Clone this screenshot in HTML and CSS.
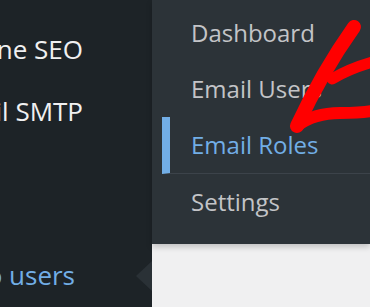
FILE: index.html
```html
<!DOCTYPE html>
<html lang="en">
<head>
    <meta charset="UTF-8">
    <meta name="viewport" content="width=device-width, initial-scale=1.0">
    <title>Email Users menu</title>
    <link rel="stylesheet" href="styles.css">
</head>
<body>
    <div class="screen">
        <nav class="sidebar">
            <ul class="menu">
                <li class="menu-item"><span>All in One SEO</span></li>
                <li class="menu-item"><span>WP Mail SMTP</span></li>
                <li class="menu-spacer"></li>
                <li class="menu-item is-open"><span>Email to users</span></li>
            </ul>
        </nav>

        <main class="content">
            <ul class="submenu">
                <li>Dashboard</li>
                <li>Email Users</li>
                <li class="current">Email Roles</li>
                <li>Settings</li>
            </ul>
        </main>

        <!-- red hand drawn arrow pointing at Email Roles -->
        <svg class="scribble" width="370" height="307" viewBox="0 0 370 307">
            <g fill="none" stroke="#ff0000" stroke-linecap="round" stroke-linejoin="round">
                <path d="M354 27 Q 322 72 297 126" stroke-width="14"/>
                <path d="M297 126 Q 314 113 340 113 T 376 110" stroke-width="12"/>
                <path d="M332 79 Q 350 68 376 61" stroke-width="11"/>
            </g>
        </svg>
    </div>
</body>
</html>
```

FILE: styles.css
```css
body {
    margin: 0;
    padding: 0;
    font-family: 'Open Sans', 'Noto Sans', sans-serif;
    background-color: #f0f0f1;
    overflow: hidden;
}

.screen {
    position: relative;
    display: flex;
    width: 370px;
    height: 307px;
    overflow: hidden;
}

.sidebar {
    width: 152px;
    flex-shrink: 0;
    background-color: #1d2327;
}

.menu {
    list-style: none;
    margin: 0;
    padding: 18px 0 0 0;
}

.menu-item {
    position: relative;
    height: 62px;
    line-height: 62px;
    display: flex;
    justify-content: flex-end;
    padding-right: 69px;
    font-size: 26px;
    color: #f0f0f1;
    white-space: nowrap;
}

.menu-item span {
    flex-shrink: 0;
}

.menu-spacer {
    height: 102px;
}

.menu-item.is-open {
    color: #72aee6;
    padding-right: 77px;
}

/* flyout pointer */
.menu-item.is-open::after {
    content: "";
    position: absolute;
    right: 0;
    top: 17px;
    border-top: 15px solid transparent;
    border-bottom: 15px solid transparent;
    border-right: 16px solid #2a3136;
}

.content {
    flex-grow: 1;
    background-color: #f0f0f1;
}

.submenu {
    list-style: none;
    margin: 0;
    padding: 5px 0 14px 0;
    background-color: #2c3338;
    box-shadow: 0px 3px 6px rgba(0, 0, 0, 0.2);
}

.submenu li {
    margin-left: 10px;
    padding-left: 29px;
    height: 56px;
    line-height: 56px;
    font-size: 24px;
    color: #c3c4c7;
    white-space: nowrap;
}

.submenu li.current {
    color: #72aee6;
    border-left: 8px solid #72aee6;
    border-bottom: 1px solid #3c434a;
    padding-left: 21px;
}

.scribble {
    position: absolute;
    left: 0;
    top: 0;
    pointer-events: none;
}
```
